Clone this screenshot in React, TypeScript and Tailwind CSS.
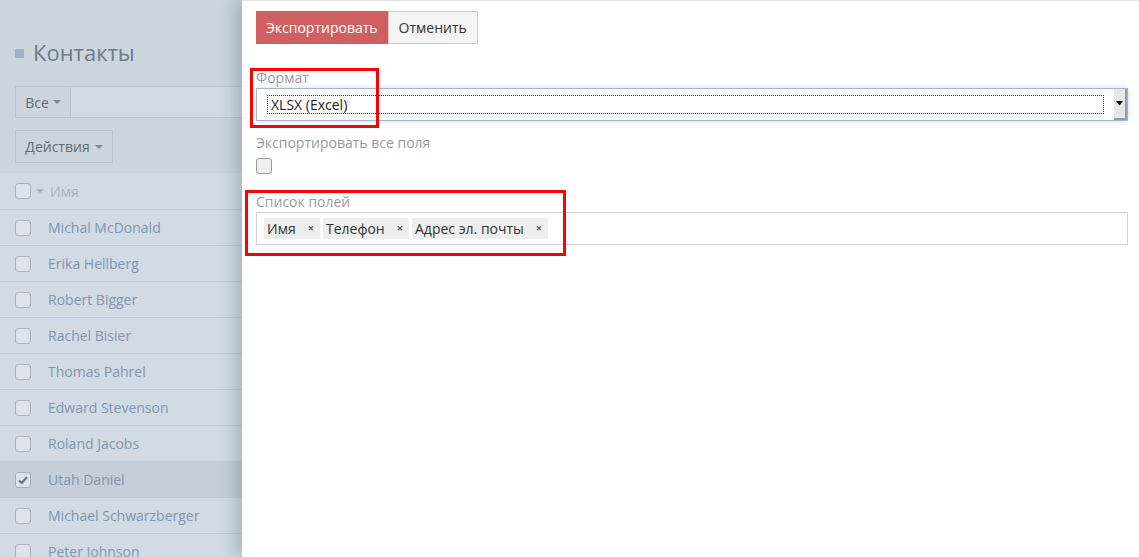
import React from "react";

const names = [
  "Michal McDonald",
  "Erika Hellberg",
  "Robert Bigger",
  "Rachel Bisier",
  "Thomas Pahrel",
  "Edward Stevenson",
  "Roland Jacobs",
  "Utah Daniel",
  "Michael Schwarzberger",
  "Peter Johnson",
];

function Box({ checked }: { checked?: boolean }) {
  return (
    <div className="w-[16px] h-[16px] rounded-[3px] border border-[#a9b2bb] bg-[#dde3ea] flex items-center justify-center shrink-0">
      {checked && (
        <svg width="12" height="12" viewBox="0 0 12 12">
          <path d="M2 6.5 L4.8 9 L10 3" stroke="#6b7580" strokeWidth="2" fill="none" />
        </svg>
      )}
    </div>
  );
}

function Caret({ color = "#7d8894" }: { color?: string }) {
  return (
    <svg width="8" height="4" viewBox="0 0 8 4" className="inline-block">
      <path d="M0 0 L8 0 L4 4 Z" fill={color} />
    </svg>
  );
}

function Tag({ label }: { label: string }) {
  return (
    <div className="h-[21px] bg-[#eeeeee] flex items-center pl-[3px] pr-[6px] text-[14px] text-[#333]">
      <span>{label}</span>
      <span className="ml-[12px] text-[11px] font-bold text-[#555]">×</span>
    </div>
  );
}

export default function App() {
  return (
    <div
      className="w-[1139px] h-[557px] overflow-hidden flex relative bg-[#d2dbe4]"
      style={{ fontFamily: "'Open Sans', 'Noto Sans', sans-serif" }}
    >
      {/* left dimmed page */}
      <div className="w-[242px] shrink-0 flex flex-col">
        <div className="bg-[#ccd5de] pt-[38px] pb-[10px] shrink-0">
          <div className="flex items-center pl-[15px] h-[28px]">
            <div className="w-[9px] h-[9px] bg-[#9bb3c9] mr-[9px] mt-[2px]" />
            <span className="text-[22px] text-[#6c7a88] leading-none">Контакты</span>
          </div>
          <div className="flex mt-[20px] pl-[15px]">
            <div className="h-[32px] w-[56px] border border-[#bcc5cf] flex items-center justify-center gap-[4px] text-[14px] text-[#5f6b77]">
              Все <Caret />
            </div>
            <div className="h-[32px] flex-1 border-y border-[#bcc5cf] bg-[#d1d9e2]" />
          </div>
          <div className="pl-[15px] mt-[12px]">
            <div className="h-[33px] w-[98px] border border-[#bcc5cf] flex items-center justify-center gap-[5px] text-[14px] text-[#5f6b77]">
              Действия <Caret />
            </div>
          </div>
        </div>
        <div className="h-[37px] shrink-0 flex items-center pl-[15px] border-b border-[#c3ccd6] bg-[#d2dbe4]">
          <Box />
          <span className="ml-[5px] mr-[6px] flex items-center">
            <Caret color="#a8b2bc" />
          </span>
          <span className="text-[14px] text-[#a8b3be]">Имя</span>
        </div>
        {names.map((n) => (
          <div
            key={n}
            className={`h-[36px] shrink-0 flex items-center pl-[15px] border-b border-[#c3ccd6] ${
              n === "Utah Daniel" ? "bg-[#c6cfd8]" : "bg-[#d2dbe4]"
            }`}
          >
            <Box checked={n === "Utah Daniel"} />
            <span className="ml-[17px] text-[14px] text-[#7e96b1] -mt-[1px]">{n}</span>
          </div>
        ))}
      </div>

      {/* right panel */}
      <div className="flex-1 bg-white border-t border-[#e2e2e2] shadow-[-8px_0_14px_rgba(60,80,100,0.25)] pl-[14px] pr-[11px] pt-[10px] relative z-10">
        <div className="flex">
          <div className="h-[33px] px-[10px] bg-[#d05f5f] text-white text-[14px] flex items-center">
            Экспортировать
          </div>
          <div className="h-[33px] px-[10px] bg-[#f4f4f4] border border-[#cccccc] text-[#333] text-[14px] flex items-center">
            Отменить
          </div>
        </div>

        <div className="mt-[24px] text-[14px] text-[#9a9a9a] leading-[20px]">Формат</div>
        <div className="h-[33px] border border-[#a6b6c6] shadow-[0_0_6px_rgba(120,160,210,0.35)] flex items-stretch bg-white">
          <div className="flex-1 flex items-center pl-[10px] pr-[10px]">
            <div className="flex-1 h-[19px] border border-dotted border-[#333] flex items-center pl-[3px] text-[14px] text-[#222]">
              XLSX (Excel)
            </div>
          </div>
          <div className="w-[13px] bg-[#e6e6e6] border-r-2 border-b-2 border-[#9a9a9a] flex items-center justify-center">
            <svg width="7" height="5" viewBox="0 0 7 5">
              <path d="M0 0 L7 0 L3.5 4.5 Z" fill="#000" />
            </svg>
          </div>
        </div>

        <div className="mt-[12px] text-[14px] text-[#9a9a9a] leading-[20px]">Экспортировать все поля</div>
        <div className="mt-[5px] w-[16px] h-[16px] rounded-[3px] border border-[#9a9a9a] bg-[#f0f0f0]" />

        <div className="mt-[18px] text-[14px] text-[#9a9a9a] leading-[20px]">Список полей</div>
        <div className="h-[33px] border border-[#d4d4d4] flex items-center pl-[7px] gap-[3px]">
          <Tag label="Имя" />
          <Tag label="Телефон" />
          <Tag label="Адрес эл. почты" />
        </div>
      </div>

      {/* red annotation frames */}
      <div className="absolute left-[250px] top-[68px] w-[129px] h-[60px] border-[3px] border-[#ff0000] z-20 pointer-events-none" />
      <div className="absolute left-[245px] top-[190px] w-[321px] h-[66px] border-[3px] border-[#ff0000] z-20 pointer-events-none" />
    </div>
  );
}
